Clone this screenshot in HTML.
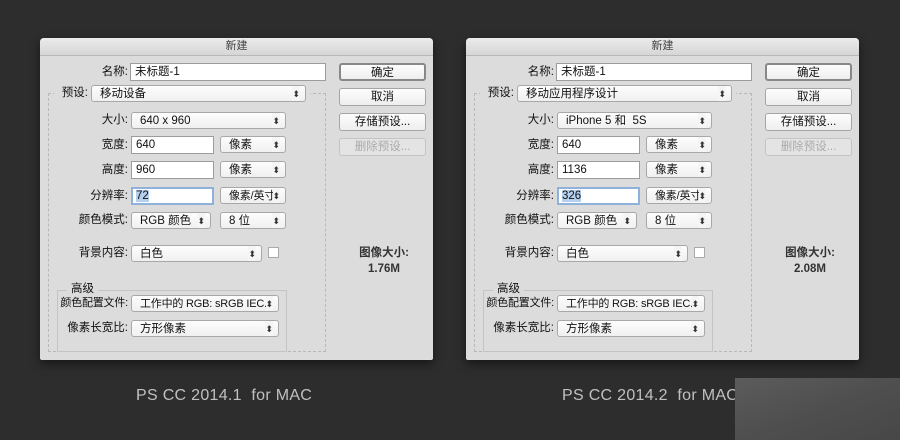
<!DOCTYPE html><html><head><meta charset="utf-8"><style>
*{margin:0;padding:0;box-sizing:border-box}
body{width:900px;height:440px;background:#2d2d2d;position:relative;overflow:hidden;font-family:"Liberation Sans","Noto Sans CJK SC",sans-serif;font-size:11.5px;color:#111}
.d{position:absolute;top:38px;width:393px;height:322px;background:#dcdcdc;border-radius:4px 4px 2px 2px;box-shadow:0 4px 10px rgba(0,0,0,.5)}
.tb{position:absolute;left:0;top:0;width:100%;height:18px;background:linear-gradient(#ebebeb,#d6d6d6);border-bottom:1px solid #b8b8b8;border-radius:4px 4px 0 0;text-align:center;font-size:11px;line-height:17px;color:#444}
.a{position:absolute}
.lb{position:absolute;text-align:right;width:120px;line-height:19px;white-space:nowrap}
.f{position:absolute;background:#fff;border:1px solid #9c9c9c;height:18px;line-height:17px;padding-left:4px;white-space:nowrap}
.s{position:absolute;background:linear-gradient(#fdfdfd,#f0f0f0);border:1px solid #a8a8a8;border-radius:3px;height:17px;line-height:16px;padding-left:8px;white-space:nowrap;overflow:hidden;padding-right:14px}
.s:after{content:"⬍";position:absolute;right:5px;top:0;font-size:9px;color:#333;background:#f5f5f5}
.b{position:absolute;left:299px;width:87px;height:18px;background:linear-gradient(#fdfdfd,#eee);border:1px solid #a5a5a5;border-radius:3px;text-align:center;line-height:16px}
.g{position:absolute;border:1px dashed #b8b8b8}
.g2{position:absolute;border:1px solid #c4c4c4}
.cap{position:absolute;top:387px;color:#c0c0c0;font-size:16px;letter-spacing:.3px}
.sm{font-size:11px;letter-spacing:-.2px}
</style></head><body>
<div class="d" style="left:40px">
<div class="tb">新建</div>
<div class="lb" style="left:-32px;top:25px">名称:</div><div class="f" style="left:90px;top:25px;width:196px">未标题-1</div>
<div class="b" style="top:25px;border:2px solid #888">确定</div>
<div class="b" style="top:50px">取消</div>
<div class="b" style="top:75px">存储预设...</div>
<div class="b" style="top:100px;color:#aaa;border-color:#c4c4c4;background:#e4e4e4">删除预设...</div>
<div class="g" style="left:8px;top:55px;width:278px;height:259px"></div>
<div class="a" style="left:14px;top:46px;width:256px;height:18px;background:#dcdcdc"></div>
<div class="lb" style="left:-72px;top:46px">预设:</div><div class="s" style="left:51px;top:47px;width:215px">移动设备</div>
<div class="lb" style="left:-32px;top:73px">大小:</div><div class="s" style="left:91px;top:74px;width:155px">640 x 960</div>
<div class="lb" style="left:-32px;top:98px">宽度:</div><div class="f" style="left:91px;top:98px;width:83px">640</div><div class="s" style="left:180px;top:98px;width:66px">像素</div>
<div class="lb" style="left:-32px;top:123px">高度:</div><div class="f" style="left:91px;top:123px;width:83px">960</div><div class="s" style="left:180px;top:123px;width:66px">像素</div>
<div class="lb" style="left:-32px;top:149px">分辨率:</div><div class="f" style="left:91px;top:149px;width:83px;border:2px solid #8fb2dc;padding-left:3px;line-height:15px"><span style="background:#b5d0ef">72</span></div><div class="s sm" style="left:180px;top:149px;width:66px">像素/英寸</div>
<div class="lb" style="left:-32px;top:173px">颜色模式:</div><div class="s" style="left:91px;top:174px;width:80px">RGB 颜色</div><div class="s" style="left:180px;top:174px;width:66px">8 位</div>
<div class="lb" style="left:-32px;top:206px">背景内容:</div><div class="s" style="left:91px;top:207px;width:131px">白色</div><div class="a" style="left:228px;top:209px;width:11px;height:11px;background:#fff;border:1px solid #aaa"></div>
<div class="g2" style="left:17px;top:252px;width:230px;height:62px"></div>
<div class="a" style="left:27px;top:243px;padding:0 4px;background:#dcdcdc;line-height:17px">高级</div>
<div class="lb sm" style="left:-32px;top:256px">颜色配置文件:</div><div class="s sm" style="left:91px;top:257px;width:148px">工作中的 RGB: sRGB IEC...</div>
<div class="lb" style="left:-32px;top:281px">像素长宽比:</div><div class="s" style="left:91px;top:282px;width:148px">方形像素</div>
<div class="a" style="left:299px;top:206px;width:90px;text-align:center;font-weight:bold;color:#333">图像大小:</div>
<div class="a" style="left:299px;top:225px;width:90px;text-align:center;font-weight:bold;color:#333">1.76M</div>
</div>
<div class="d" style="left:466px">
<div class="tb">新建</div>
<div class="lb" style="left:-32px;top:25px">名称:</div><div class="f" style="left:90px;top:25px;width:196px">未标题-1</div>
<div class="b" style="top:25px;border:2px solid #888">确定</div>
<div class="b" style="top:50px">取消</div>
<div class="b" style="top:75px">存储预设...</div>
<div class="b" style="top:100px;color:#aaa;border-color:#c4c4c4;background:#e4e4e4">删除预设...</div>
<div class="g" style="left:8px;top:55px;width:278px;height:259px"></div>
<div class="a" style="left:14px;top:46px;width:256px;height:18px;background:#dcdcdc"></div>
<div class="lb" style="left:-72px;top:46px">预设:</div><div class="s" style="left:51px;top:47px;width:215px">移动应用程序设计</div>
<div class="lb" style="left:-32px;top:73px">大小:</div><div class="s" style="left:91px;top:74px;width:155px">iPhone 5 和 &nbsp;5S</div>
<div class="lb" style="left:-32px;top:98px">宽度:</div><div class="f" style="left:91px;top:98px;width:83px">640</div><div class="s" style="left:180px;top:98px;width:66px">像素</div>
<div class="lb" style="left:-32px;top:123px">高度:</div><div class="f" style="left:91px;top:123px;width:83px">1136</div><div class="s" style="left:180px;top:123px;width:66px">像素</div>
<div class="lb" style="left:-32px;top:149px">分辨率:</div><div class="f" style="left:91px;top:149px;width:83px;border:2px solid #8fb2dc;padding-left:3px;line-height:15px"><span style="background:#b5d0ef">326</span></div><div class="s sm" style="left:180px;top:149px;width:66px">像素/英寸</div>
<div class="lb" style="left:-32px;top:173px">颜色模式:</div><div class="s" style="left:91px;top:174px;width:80px">RGB 颜色</div><div class="s" style="left:180px;top:174px;width:66px">8 位</div>
<div class="lb" style="left:-32px;top:206px">背景内容:</div><div class="s" style="left:91px;top:207px;width:131px">白色</div><div class="a" style="left:228px;top:209px;width:11px;height:11px;background:#fff;border:1px solid #aaa"></div>
<div class="g2" style="left:17px;top:252px;width:230px;height:62px"></div>
<div class="a" style="left:27px;top:243px;padding:0 4px;background:#dcdcdc;line-height:17px">高级</div>
<div class="lb sm" style="left:-32px;top:256px">颜色配置文件:</div><div class="s sm" style="left:91px;top:257px;width:148px">工作中的 RGB: sRGB IEC...</div>
<div class="lb" style="left:-32px;top:281px">像素长宽比:</div><div class="s" style="left:91px;top:282px;width:148px">方形像素</div>
<div class="a" style="left:299px;top:206px;width:90px;text-align:center;font-weight:bold;color:#333">图像大小:</div>
<div class="a" style="left:299px;top:225px;width:90px;text-align:center;font-weight:bold;color:#333">2.08M</div>
</div>
<div class="cap" style="left:136px">PS CC 2014.1 &nbsp;for MAC</div>
<div class="cap" style="left:562px">PS CC 2014.2 &nbsp;for MAC</div>
<div class="a" style="left:735px;top:378px;width:165px;height:62px;background:linear-gradient(160deg,#5c5c5c,#4f4f4f 50%,#474747)"></div>
</body></html>
